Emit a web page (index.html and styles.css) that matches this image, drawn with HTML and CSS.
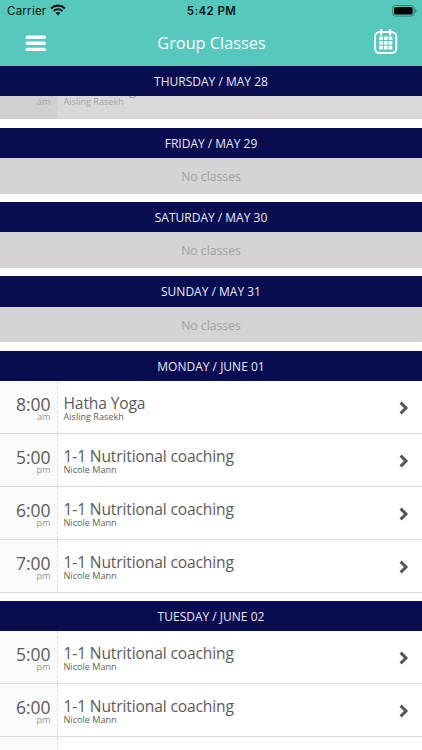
FILE: index.html
```html
<!DOCTYPE html>
<html lang="en">
<head>
<meta charset="utf-8">
<title>Group Classes</title>
<link rel="stylesheet" href="styles.css">
</head>
<body>
<header class="top">
  <div class="status">
    <div class="carrier"><span>Carrier</span>
      <svg class="wifi" width="16" height="12" viewBox="0 0 16 12"><g fill="none" stroke="#071412" stroke-width="2.1"><path d="M1.1 4.4a10 10 0 0 1 13.8 0"/><path d="M3.6 7.1a6.3 6.3 0 0 1 8.8 0"/></g><path d="M8 11.6 5.6 9.1a3.4 3.4 0 0 1 4.8 0z" fill="#071412"/></svg>
    </div>
    <div class="clock">5:42 PM</div>
    <svg class="battery" width="25" height="12" viewBox="0 0 25 12"><rect x=".5" y=".5" width="21.6" height="10.6" rx="3" fill="none" stroke="#2f7f76"/><rect x="2" y="2" width="18.6" height="7.6" rx="1.6" fill="#000"/><path d="M23.2 4v3.8q1.3-.5 1.3-1.9T23.2 4z" fill="#2b6a63"/></svg>
  </div>
  <nav class="bar">
    <svg class="menu" width="22" height="18" viewBox="0 0 22 18"><g stroke="#fff" stroke-width="3.4" stroke-linecap="round"><path d="M2.2 2.2h17.1M2.2 8.3h17.1M2.2 14.4h17.1"/></g></svg>
    <h1 class="title">Group Classes</h1>
    <svg class="calendar" width="24" height="26" viewBox="0 0 24 26"><rect x="1.1" y="3" width="21.2" height="21.1" rx="4.6" fill="none" stroke="#fff" stroke-width="2"/><path d="M7.2.9v4.5M16.1.9v4.5" stroke="#fff" stroke-width="2.2" stroke-linecap="round"/><g fill="#fff"><path d="M5.2 7.4h3.7v3.7H5.2zM9.9 7.4h3.7v3.7H9.9zM14.6 7.4h3.7v3.7h-3.7zM5.2 12.1h3.7v3.7H5.2zM9.9 12.1h3.7v3.7H9.9zM14.6 12.1h3.7v3.7h-3.7zM5.2 16.8h3.7v3.7H5.2zM9.9 16.8h3.7v3.7H9.9zM14.6 16.8h3.7v3.7h-3.7z"/></g></svg>
  </nav>
</header>
<main class="schedule">
  <section class="day">
    <h2 class="date">THURSDAY / MAY 28</h2>
    <div class="scrolled">
      <div class="row past"><div class="time"><b>8:00</b><small>am</small></div><div class="info"><b>Hatha Yoga</b><small>Aisling Rasekh</small></div></div>
    </div>
  </section>
  <section class="day"><h2 class="date">FRIDAY / MAY 29</h2><p class="empty">No classes</p></section>
  <section class="day"><h2 class="date">SATURDAY / MAY 30</h2><p class="empty">No classes</p></section>
  <section class="day"><h2 class="date">SUNDAY / MAY 31</h2><p class="empty">No classes</p></section>
  <section class="day">
    <h2 class="date">MONDAY / JUNE 01</h2>
    <div class="row"><div class="time"><b>8:00</b><small>am</small></div><div class="info"><b>Hatha Yoga</b><small>Aisling Rasekh</small></div><svg class="arrow" width="10" height="14" viewBox="0 0 10 14"><path d="M1.6 1.6 7 7l-5.4 5.4" fill="none" stroke="#555" stroke-width="3"/></svg></div>
    <div class="row"><div class="time"><b>5:00</b><small>pm</small></div><div class="info"><b>1-1 Nutritional coaching</b><small>Nicole Mann</small></div><svg class="arrow" width="10" height="14" viewBox="0 0 10 14"><path d="M1.6 1.6 7 7l-5.4 5.4" fill="none" stroke="#555" stroke-width="3"/></svg></div>
    <div class="row"><div class="time"><b>6:00</b><small>pm</small></div><div class="info"><b>1-1 Nutritional coaching</b><small>Nicole Mann</small></div><svg class="arrow" width="10" height="14" viewBox="0 0 10 14"><path d="M1.6 1.6 7 7l-5.4 5.4" fill="none" stroke="#555" stroke-width="3"/></svg></div>
    <div class="row"><div class="time"><b>7:00</b><small>pm</small></div><div class="info"><b>1-1 Nutritional coaching</b><small>Nicole Mann</small></div><svg class="arrow" width="10" height="14" viewBox="0 0 10 14"><path d="M1.6 1.6 7 7l-5.4 5.4" fill="none" stroke="#555" stroke-width="3"/></svg></div>
  </section>
  <section class="day">
    <h2 class="date">TUESDAY / JUNE 02</h2>
    <div class="row"><div class="time"><b>5:00</b><small>pm</small></div><div class="info"><b>1-1 Nutritional coaching</b><small>Nicole Mann</small></div><svg class="arrow" width="10" height="14" viewBox="0 0 10 14"><path d="M1.6 1.6 7 7l-5.4 5.4" fill="none" stroke="#555" stroke-width="3"/></svg></div>
    <div class="row"><div class="time"><b>6:00</b><small>pm</small></div><div class="info"><b>1-1 Nutritional coaching</b><small>Nicole Mann</small></div><svg class="arrow" width="10" height="14" viewBox="0 0 10 14"><path d="M1.6 1.6 7 7l-5.4 5.4" fill="none" stroke="#555" stroke-width="3"/></svg></div>
    <div class="row"><div class="time"></div></div>
  </section>
</main>
</body>
</html>
```
FILE: styles.css
```css
* { box-sizing: border-box; }
body {
  margin: 0;
  height: 750px;
  overflow: hidden;
  display: flex;
  flex-direction: column;
  background: #fff;
  color: #5a5a5a;
  font-family: "Open Sans", "Noto Sans", sans-serif;
}
.top { flex: none; height: 65.5px; background: #56c8bd; }
.status {
  height: 22px;
  padding: 0 6px 0 7px;
  display: grid;
  grid-template-columns: 1fr auto 1fr;
  align-items: center;
  font-family: Inter, "Liberation Sans", sans-serif;
  font-size: 11.5px;
  line-height: 22px;
  color: #071412;
}
.carrier { display: flex; align-items: center; gap: 4px; letter-spacing: .25px; }
.wifi { margin-top: -2px; }
.clock { font-weight: 600; letter-spacing: .4px; }
.battery { justify-self: end; margin-right: -1px; }
.bar {
  height: 43px;
  padding: 0 24px 0 25px;
  display: grid;
  grid-template-columns: 24px 1fr 24px;
  align-items: center;
}
.title { margin: 0; font-size: 16.3px; font-weight: 400; color: #fff; line-height: 43px; text-align: center; }
.calendar { margin-top: -3px; }
.schedule { flex: 1; min-height: 0; overflow: hidden; }
.day { margin-bottom: 8.3px; }
.date {
  margin: 0;
  height: 30.3px;
  background: #080c50;
  color: #e9e9f5;
  text-align: center;
  font-size: 12px;
  line-height: 31px;
  font-weight: 400;
}
.empty {
  margin: 0;
  height: 35.7px;
  background: #d5d3d4;
  color: #a2a0a1;
  text-align: center;
  font-size: 12.2px;
  line-height: 37px;
}
.scrolled { height: 23.6px; overflow: hidden; display: flex; flex-direction: column; justify-content: flex-end; }
.row {
  flex: none;
  height: 53px;
  display: flex;
  border-bottom: 1px solid #dcdcdc;
}
.time {
  width: 57.5px;
  padding: 15px 6px 0 0;
  background: #fafafa;
  border-right: 1px dashed #ddd;
  text-align: right;
}
.info { flex: 1; padding: 14px 0 0 6px; }
.row b, .row small { display: block; font-weight: 400; }
.row b { font-size: 15.6px; line-height: 17px; letter-spacing: -.14px; }
.time b { font-size: 17.5px; line-height: 16px; letter-spacing: 0; }
.row small { font-size: 9.1px; line-height: 10px; }
.info small { color: #606060; }
.time small { color: #999; }
.arrow { align-self: center; margin-right: 13.5px; margin-top: 2px; }
.past { background: #dad8d9; color: #aaa; border-color: #d0cecf; }
.past .time { background: #d1cfd0; border-color: #d5d3d4; }
.past .info small, .past .time small { color: #a6a4a5; }
```
